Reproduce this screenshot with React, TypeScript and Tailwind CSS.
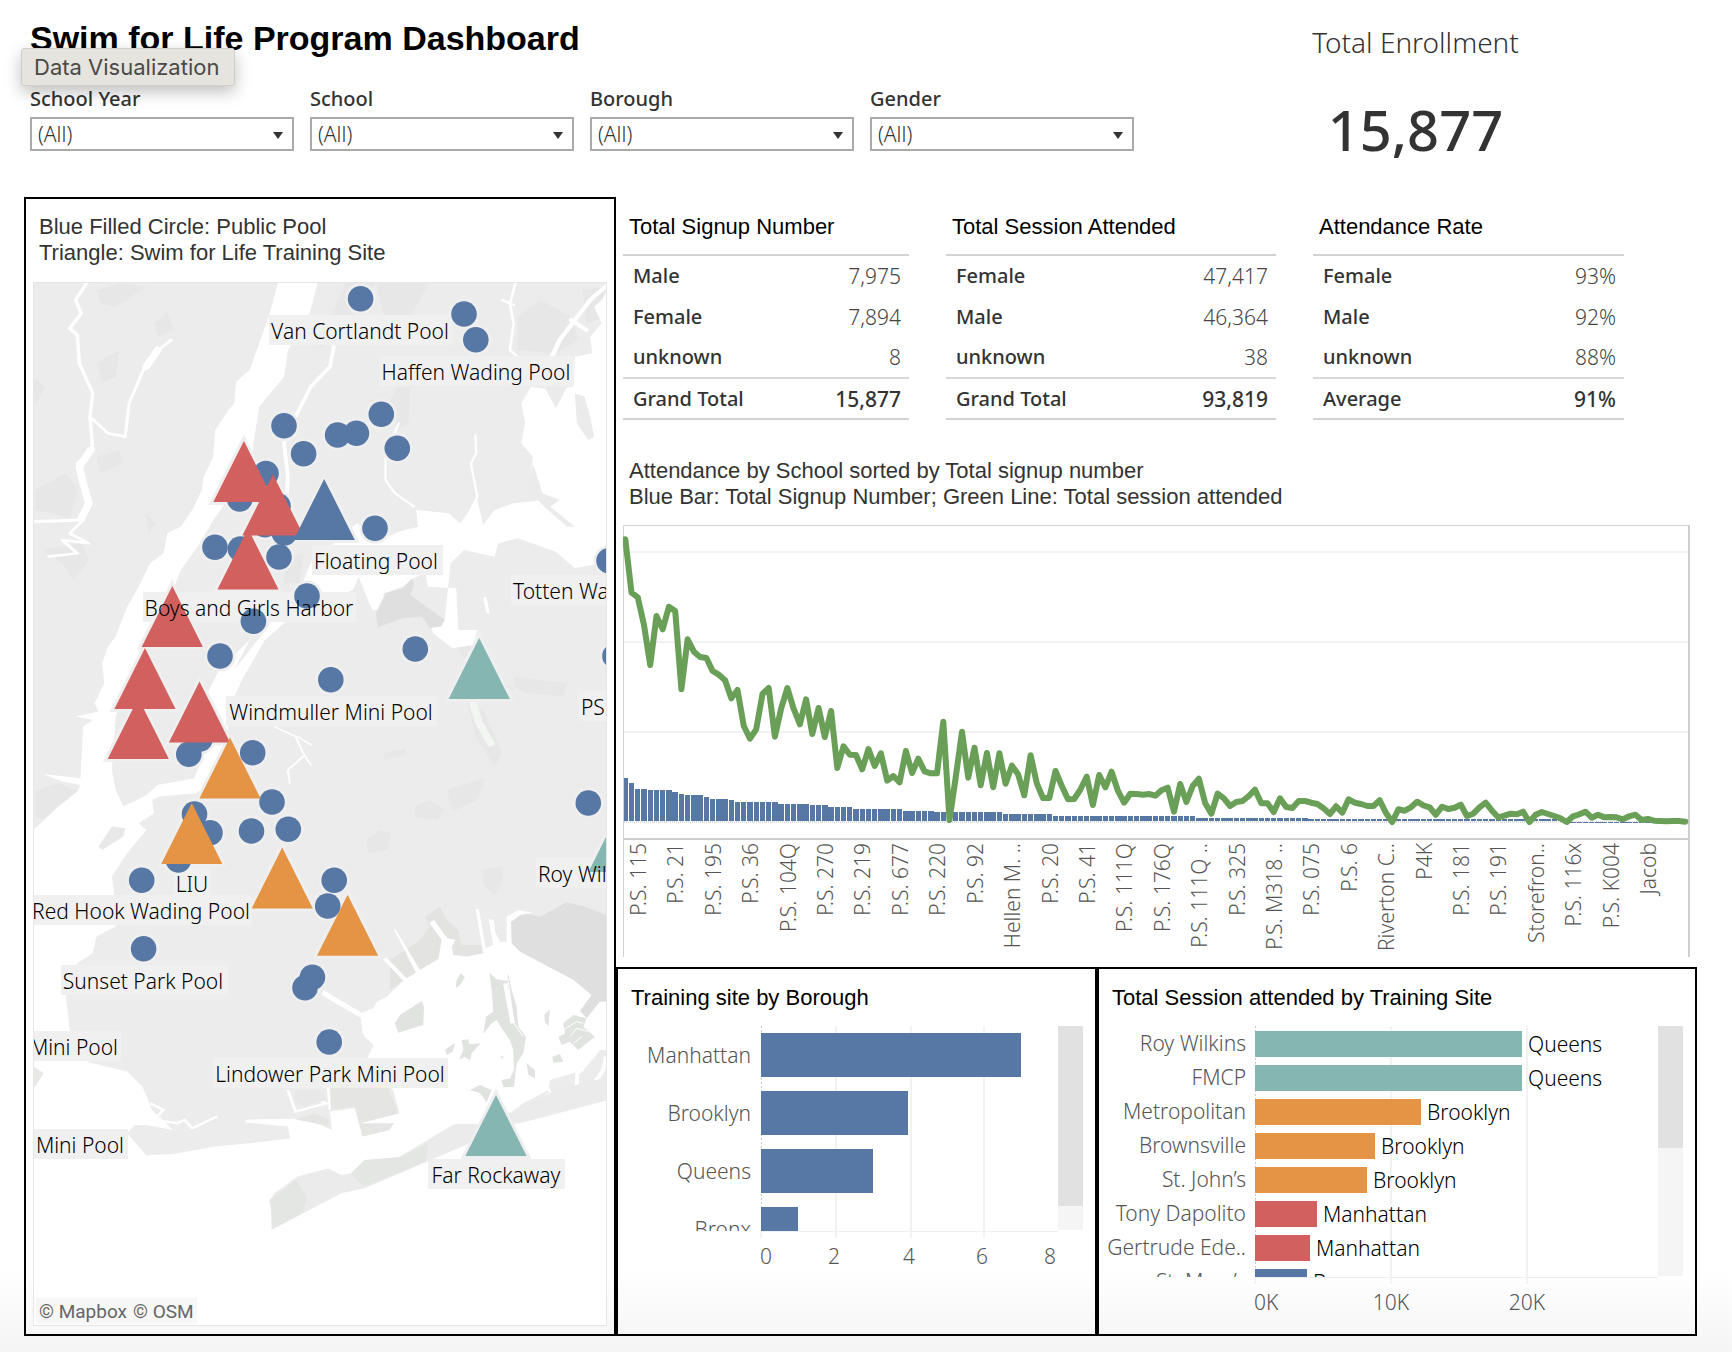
import React from "react";

const SANS = "font-['Noto_Sans','Open_Sans',sans-serif]";
const ARIAL = "font-['Liberation_Sans',Arial,sans-serif]";

const BLUE = "#5778a4";
const RED = "#d1605e";
const ORANGE = "#e49444";
const TEAL = "#85b6b2";

/* ---------- Filters ---------- */

const filters = ["School Year", "School", "Borough", "Gender"];

function Filter({ label }: { label: string }) {
  const id = label.toLowerCase().replace(" ", "-");
  return (
    <div className="min-w-0">
      <label htmlFor={id} className="block text-[20px] leading-6 font-medium text-[#333333]">
        {label}
      </label>
      <div className="relative mt-[6px]">
        <select
          id={id}
          className="block h-[34px] w-full appearance-none border-2 border-[#aaaaaa] bg-white pr-8 pl-[6px] text-[21px] leading-6 font-light text-[#333333]"
        >
          <option>(All)</option>
        </select>
        <svg
          viewBox="0 0 10 7"
          className="pointer-events-none absolute top-[15px] right-[11px] h-[7px] w-[10px]"
          aria-hidden="true"
        >
          <path d="M0 0H10L5 7Z" fill="#333" />
        </svg>
      </div>
    </div>
  );
}

/* ---------- Map ---------- */

const pools: [number, number][] = [
  [360.6, 298.7], [464, 314], [475.8, 339.7], [284, 425.7], [303.6, 453.7], [337.6, 435],
  [356.4, 433.3], [381.3, 414.3], [397.3, 448.3], [266, 473.5], [239.7, 499], [278, 506],
  [265, 524.7], [284.4, 533], [375, 528.3], [215, 547.3], [240.4, 549], [279, 557],
  [307, 596], [253.4, 621.3], [220, 656], [415.3, 649], [330.8, 679.7], [252.7, 752.7],
  [188.8, 754.3], [200, 739], [272, 802], [194.5, 814], [210, 832.7], [251.5, 831],
  [288.3, 829.3], [178.4, 860], [141.7, 880.3], [334.2, 880.3], [327.7, 906], [143.6, 948.7],
  [588.3, 803], [609, 560.7], [615, 656], [312.4, 977.3], [305, 987.7], [329.2, 1042],
];

const sites: [number, number, string][] = [
  [243.9, 441, RED], [273, 474.5, RED], [324.2, 479, BLUE], [248, 528.5, RED],
  [172.3, 586, RED], [138.3, 698, RED], [145, 648, RED], [199.5, 681.5, RED],
  [230, 737.5, ORANGE], [191.8, 803, ORANGE], [282.2, 847.5, ORANGE], [347.6, 894.7, ORANGE],
  [479.2, 638, TEAL], [619, 811, TEAL], [496, 1095, TEAL],
];

type Label = { text: string; x: number; y: number; from: number; to: number; anchor?: "start" | "middle" | "end" };

const labels: Label[] = [
  { text: "Van Cortlandt Pool", x: 360, y: 339, from: 269, to: 453, anchor: "middle" },
  { text: "Haffen Wading Pool", x: 476, y: 380, from: 380, to: 574, anchor: "middle" },
  { text: "Floating Pool", x: 376, y: 569, from: 312, to: 443, anchor: "middle" },
  { text: "Totten Wading Pool", x: 513, y: 599, from: 511, to: 620 },
  { text: "Boys and Girls Harbor", x: 249, y: 616, from: 143, to: 356, anchor: "middle" },
  { text: "Windmuller Mini Pool", x: 331, y: 720, from: 226, to: 437, anchor: "middle" },
  { text: "PS", x: 581, y: 715, from: 579, to: 620 },
  { text: "Roy Wilkins", x: 538, y: 882, from: 536, to: 620 },
  { text: "LIU", x: 192, y: 892, from: 174, to: 211, anchor: "middle" },
  { text: "Red Hook Wading Pool", x: 141, y: 919, from: 30, to: 252, anchor: "middle" },
  { text: "Sunset Park Pool", x: 143, y: 989, from: 61, to: 228, anchor: "middle" },
  { text: "Mini Pool", x: 118, y: 1055, from: 30, to: 121, anchor: "end" },
  { text: "Mini Pool", x: 124, y: 1153, from: 30, to: 128, anchor: "end" },
  { text: "Lindower Park Mini Pool", x: 330, y: 1082, from: 213, to: 448, anchor: "middle" },
  { text: "Far Rockaway", x: 496, y: 1183, from: 428, to: 565, anchor: "middle" },
];

const triangle = (x: number, y: number) => `M${x} ${y}l30.6 61h-61.2Z`;

function JamaicaBay() {
  return (
    <g transform="translate(310 890) scale(0.3333)">
      <path fill="#e3e4e2" d="M240 210L330 150 360 110 345 80 390 50 410 90 445 120 455 165 515 165 520 190 470 200 425 195 380 208 320 245 240 300Z" />
      <path fill="#dfdfdf" d="M603 95L640 70 690 80 770 37 820 48 895 78 895 345 870 335 830 385 805 365 845 315 790 270 630 185 603 160Z" />
      <path
        fill="#fff"
        d="M153 384L35 315 40 300 155 368 190 355 200 335 230 320 280 272 218 208 230 203 290 265 318 248 250 115 258 120 330 240 385 208 395 150 358 98 372 90 412 145 437 150 425 170 430 195 470 200 520 190 497 58 507 58 527 175 550 165 536 88 552 90 555 125 570 155 590 155 590 80 625 60 668 68 630 75 603 95 605 160 630 185 790 270 845 315 810 362 830 385 870 335 895 335 895 480 860 490 820 540 720 570 715 600 640 640 605 668 560 640 540 700 150 700 270 670 230 520 190 465 158 430Z"
      />
      <path fill="#ececec" d="M895 480L870 480 855 500 820 540 720 570 715 600 640 640 605 665 620 702 700 682 895 630Z" />
      <g fill="#e1e3e1">
        <path d="M255 400L270 375 335 333 342 350 340 405 265 428Z" />
        <path d="M437 295L440 270 452 250 465 262 450 285Z" />
        <path d="M538 248L560 268 590 272 595 250 605 300 620 350 625 410 648 440 640 490 620 520 612 590 580 592 575 570 600 565 612 540 610 480 600 450 575 415 560 390 545 400 520 432 528 380 550 365 545 300Z" />
        <path d="M455 450L475 448 478 462 512 460 485 490 480 512 465 500 447 510 460 480Z M405 480L435 458 428 485 410 495Z" />
        <path d="M480 600L510 585 545 600 530 637 510 610Z M650 520L675 540 675 565 655 555Z M703 375L720 358 715 410 705 395Z" />
        <path d="M745 440L765 432 760 400 790 375 830 385 820 410 855 440 830 460 805 480 780 455 755 465Z M727 500L750 492 760 515 730 518Z" />
        <path d="M570 500L580 498 578 508Z" />
      </g>
      <g fill="none" stroke="#fff">
        <path strokeWidth="13" d="M586 280L608 400" />
        <path strokeWidth="3" d="M593 262L612 400 640 440M760 420L800 395 820 400M780 440L800 415 835 425M790 460L815 440" />
        <path strokeWidth="12" d="M820 535L802 550 800 598M888 500L880 540 857 574" />
        <path strokeWidth="6" d="M690 610L712 590 722 608 700 622" />
      </g>
    </g>
  );
}

function Terrain() {
  return (
    <g>
      <g transform="translate(20 190) scale(0.3827 0.3333)">
        <rect x="30" y="270" width="1510" height="3150" fill="#ececec" />

        {/* parks and tonal patches */}
        <g fill="#e3e3e3" opacity="0.45">
          <path d="M36 565L65 590 45 640 36 640Z" />
          <path d="M200 300L260 280 330 290 250 350 210 340Z" />
          <path d="M350 400L385 365 400 420 360 440Z" />
          <path d="M200 520L260 480 250 560 215 580Z" />
          <path d="M40 900L120 850 150 900 130 980 40 960Z" />
          <path d="M850 276L930 276 850 420 780 480Z" />
          <path d="M930 276L1070 276 1000 420 960 420Z" />
          <path d="M985 590L1020 590 1015 700 985 720 965 640Z" />
          <path d="M1300 380L1360 330 1440 380 1460 450 1400 490 1300 480Z" />
          <path d="M1470 300L1530 290 1530 380 1480 400Z" />
          <path d="M330 970L355 1000 335 1030Z M200 800L260 780 270 820 210 850Z" />
          <path d="M60 1080L160 1060 180 1110 140 1170 110 1120Z" />
          <path d="M1100 1300L1160 1330 1230 1480 1290 1500 1290 1460 1430 1480 1420 1520 1330 1510 1180 1440Z" />
          <path d="M1170 1540L1210 1560 1260 1690 1240 1730 1190 1640Z" />
          <path d="M1115 1800L1215 1765 1195 1830 1130 1865Z M1035 1850L1070 1830 1110 1860 1090 1890 1030 1880Z" />
          <path d="M905 1950L940 1920 970 1930 960 1980 910 1990Z M950 1690L1010 1675 1005 1695 950 1710Z" />
          <path d="M1210 2040L1260 2030 1260 2080 1240 2120 1210 2080Z" />
          <path d="M40 1800L100 1780 155 1805 60 1890 40 1880Z M690 1110L740 1090 730 1180 690 1180Z" />
        </g>

        {/* Hudson, upper bay and East River */}
        <path
          fill="#fff"
          d="M676 270L650 380 600 540 565 575 560 640 545 660 510 720 505 800 480 860 475 900 450 960 420 1010 385 1030 375 1090 340 1120 310 1190 280 1250 250 1340 230 1370 215 1420 220 1480 195 1540 205 1565 145 1580 190 1590 165 1610 158 1765 60 1752 110 1775 158 1785 150 1805 100 1850 45 1910 30 1920 30 2617 180 2617 130 2520 120 2420 150 2320 190 2290 200 2240 250 2210 245 2100 240 2060 280 1990 330 1920 310 1900 350 1870 345 1830 365 1820 460 1810 530 1750 545 1600 545 1560 580 1470 640 1350 700 1290 760 1250 750 1235 650 1290 600 1350 520 1440 490 1510 500 1560 480 1700 455 1765 360 1785 330 1815 300 1835 270 1848 250 1800 240 1740 250 1580 300 1450 340 1330 400 1200 420 1140 470 1060 500 1000 560 900 600 850 610 760 625 650 690 560 700 480 750 400 780 270Z"
        />
        <path d="M600 1350L630 1300 655 1300 560 1440Z" fill="#ececec" />
        <path d="M205 1970L240 1910 275 1915 270 1940 215 1980Z" fill="#e8e8e8" />

        {/* Long Island Sound */}
        <path
          fill="#fff"
          d="M1540 290L1520 330 1500 350 1520 400 1490 440 1495 490 1450 500 1445 590 1390 600 1335 590 1310 640 1320 700 1310 760 1340 800 1335 860 1370 930 1290 940 1240 960 1210 1005 1195 930 1150 1000 1120 970 1035 960 1040 1010 990 1025 950 1045 880 1000 820 1060 770 1090 700 1290 760 1250 870 1200 885 1160 920 1260 955 1260 950 1210 1000 1190 1030 1165 1060 1145 1065 1190 1140 1195 1145 1320 1195 1320 1185 1365 1130 1375 1080 1330 1070 1300 1110 1290 1125 1120 1160 1080 1240 1100 1250 1060 1300 1045 1400 1085 1425 1110 1450 1135 1540 1115Z"
        />
        <path d="M1450 610L1475 620 1490 680 1500 740 1485 750 1455 700Z M1370 590L1430 590 1400 655Z" fill="#ebebeb" />
        <path d="M1340 820L1365 910 1410 930 1385 950 1450 1010 1430 1010 1370 950 1330 900Z" fill="#ebebeb" />
        <path d="M955 1210L1000 1195 1025 1165 1030 1180 1020 1215 1110 1290 1100 1310 1070 1315 1050 1280 1000 1285 935 1312 930 1270Z" fill="#dfdfdf" />

        {/* rivers and creeks */}
        <g fill="none" stroke="#fff" strokeLinejoin="round" strokeLinecap="round">
          <path strokeWidth="9" d="M175 278L145 330 160 370 130 415 150 435 155 520 190 610 183 680 190 780 150 820 165 880 185 940 165 990 36 995" />
          <path strokeWidth="20" d="M185 780L155 830 165 880 180 940 160 985" />
          <path strokeWidth="8" d="M183 680L230 730 275 740 285 640 330 520 350 490 395 450" />
          <path strokeWidth="20" d="M330 530L360 480" />
          <path strokeWidth="10" d="M820 470L810 530 760 590 720 680 690 760 700 860 695 950" />
          <path strokeWidth="7" d="M1295 278L1280 340 1290 400 1280 480 1300 500M1260 330L1290 345" />
          <path strokeWidth="6" d="M990 700L955 790 955 870 980 910 1030 950M1190 735L1192 790 1178 820 1195 920 1165 990" />
          <path strokeWidth="12" d="M1390 500L1410 450 1450 390 1490 330 1530 290M1440 390L1480 420" />
          <path strokeWidth="8" d="M165 990L130 1030 180 1060 110 1050 150 1090 75 1100" />
          <path strokeWidth="5" d="M665 1610L720 1640 740 1690 760 1725M725 1640L760 1665M740 1700L700 1740 705 1780" />
          <path strokeWidth="20" d="M1185 1545L1200 1600 1230 1660" stroke="#f4f6f4" />
          <path strokeWidth="9" d="M1215 1225L1222 1265" />
        </g>

        {/* Gravesend bay and the Atlantic */}
        <path
          fill="#fff"
          d="M30 2612L180 2617 280 2645 320 2690 345 2760 400 2820 330 2805 300 2805 280 2830 325 2890 330 2897 400 2892 510 2870 600 2860 705 2846 700 2810 590 2798 590 2790 720 2788 775 2800 815 2820 810 2765 875 2755 895 2840 965 2820 992 2775 975 2700 900 2620 925 2565 900 2540 890 2480 1495 2500 1540 2500 1540 3420 30 3420Z"
        />
        <path d="M36 2630L62 2650 36 2695Z" fill="#e8e9e7" />
        <path
          fill="none"
          stroke="#fff"
          strokeWidth="7"
          d="M340 2740L375 2760 350 2790 410 2800 430 2790 450 2815 515 2780M700 2700L720 2765 800 2740 735 2710M805 2690L810 2760M590 2793L720 2790"
        />
        <path d="M720 2700L790 2700 798 2730 740 2750 715 2730Z" fill="#e8e8e8" />
        <path d="M812 2690L960 2690 992 2775 965 2820 895 2840 875 2750 812 2760Z" fill="#e5e6e4" />
        <path d="M720 2788L770 2770 808 2790 805 2808Z" fill="#e5e6e4" />
      </g>

      <JamaicaBay />

      {/* Rockaway peninsula */}
      <g transform="translate(20 190) scale(0.3827 0.3333)">
        <path
          fill="#ebebeb"
          d="M650 3035L665 3010 725 2960 805 2936 840 2955 865 2950 905 2910 990 2902 1135 2802 1195 2802 1290 2765 1400 2700 1540 2660 1540 2730 1400 2765 1290 2802 1050 2922 900 2995 840 3010 740 3070 657 3120 660 3060Z"
        />
        <path d="M900 2910L990 2902 1065 2860 1060 2915 900 2990 865 2950Z M655 3030L720 2970 750 3020 740 3068 658 3118Z" fill="#e4e6e3" />
      </g>
    </g>
  );
}

function PoolMap() {
  return (
    <svg viewBox="33 282 574 1044" className={`mt-4 block w-full ${SANS}`} role="img" aria-label="Map of pools and training sites">
      <defs>
        <clipPath id="map-frame">
          <rect x="34" y="283" width="572" height="1042" />
        </clipPath>
      </defs>
      <g clipPath="url(#map-frame)">
        <Terrain />
        <g fill="none" stroke="#efefef" strokeWidth="6">
          {pools.map(([x, y], i) => (
            <circle key={i} cx={x} cy={y} r="12.5" />
          ))}
          {sites.map(([x, y], i) => (
            <path key={i} d={triangle(x, y)} />
          ))}
        </g>
        {labels.map((l, i) => (
          <rect key={i} x={l.from} y={l.y - 24} width={l.to - l.from} height="30" fill="#f0f0f0" />
        ))}
        {pools.map(([x, y], i) => (
          <circle key={i} cx={x} cy={y} r="12.8" fill={BLUE} />
        ))}
        {sites.map(([x, y, fill], i) => (
          <path key={i} d={triangle(x, y)} fill={fill} />
        ))}
        {labels.map((l, i) => (
          <text key={i} x={l.x} y={l.y} textAnchor={l.anchor ?? "start"} fontSize="21" fontWeight="300" fill="#000">
            {l.text}
          </text>
        ))}
        <rect x="36" y="1298" width="161" height="26" fill="#f7f7f7" />
        <text x="39" y="1318" fontSize="19" fill="#666" className="font-[Roboto,sans-serif]">
          © Mapbox
        </text>
        <text x="133" y="1318" fontSize="19" fill="#666" className="font-[Roboto,sans-serif]">
          © OSM
        </text>
      </g>
      <rect x="33.5" y="282.5" width="573" height="1043" fill="none" stroke="#e6e6e6" />
    </svg>
  );
}

/* ---------- Summary tables ---------- */

type Summary = { title: string; split: string; rows: [string, string][] };

const summaries: Summary[] = [
  {
    title: "Total Signup Number",
    split: "w-[64%]",
    rows: [["Male", "7,975"], ["Female", "7,894"], ["unknown", "8"], ["Grand Total", "15,877"]],
  },
  {
    title: "Total Session Attended",
    split: "w-[58%]",
    rows: [["Female", "47,417"], ["Male", "46,364"], ["unknown", "38"], ["Grand Total", "93,819"]],
  },
  {
    title: "Attendance Rate",
    split: "w-[46%]",
    rows: [["Female", "93%"], ["Male", "92%"], ["unknown", "88%"], ["Average", "91%"]],
  },
];

function SummaryTable({ title, split, rows }: Summary) {
  return (
    <section className="min-w-0">
      <h2 className={`pl-[6px] text-[22px] leading-[26px] whitespace-nowrap text-black ${ARIAL}`}>{title}</h2>
      <table className="mt-[14px] w-full border-collapse border-y-2 border-[#d2d2d2] text-[20px] leading-6">
        <tbody>
          {rows.map(([name, value], i) => {
            const total = i === rows.length - 1;
            return (
              <tr key={name} className={total ? "h-[41px] border-t-2 border-[#d8d8d8]" : "h-[41px]"}>
                <th scope="row" className={`pl-[10px] text-left font-medium text-[#333333] ${split}`}>
                  {name}
                </th>
                <td
                  className={
                    total
                      ? "pr-2 text-right text-[21px] font-medium text-[#333333]"
                      : "pr-2 text-right text-[21px] font-light text-[#444444]"
                  }
                >
                  {value}
                </td>
              </tr>
            );
          })}
        </tbody>
      </table>
    </section>
  );
}

/* ---------- Attendance by school ---------- */

/* Session line, in thirds of a unit below y = 510. */
const sessions = [
  88, 248, 262, 345, 465, 318, 358, 290, 303, 538, 388, 425, 441, 444, 483, 494, 511, 565, 540, 648,
  686, 658, 552, 534, 680, 595, 534, 596, 643, 568, 672, 594, 681, 603, 774, 709, 734, 735, 778, 717,
  768, 730, 812, 798, 817, 723, 789, 746, 784, 790, 790, 635, 930, 800, 665, 803, 713, 826, 729, 832,
  730, 821, 767, 793, 856, 736, 820, 864, 864, 783, 828, 868, 867, 838, 800, 885, 795, 832, 785, 842,
  878, 851, 852, 854, 852, 857, 841, 833, 905, 822, 876, 828, 806, 880, 911, 851, 865, 888, 876, 873,
  858, 839, 880, 880, 906, 865, 891, 894, 873, 873, 878, 882, 895, 912, 889, 908, 868, 878, 882, 888,
  888, 871, 909, 936, 898, 902, 892, 875, 886, 892, 914, 890, 897, 893, 884, 918, 911, 892, 878, 902,
  922, 917, 911, 913, 905, 936, 914, 906, 912, 918, 925, 936, 919, 913, 905, 923, 914, 922, 921, 922,
  928, 919, 914, 930, 927, 932, 933, 934, 933, 933, 935,
];

/* [number of schools, bar height] */
const signupRuns: [number, number][] = [
  [1, 43], [1, 38], [2, 32], [4, 31], [1, 29], [1, 27], [3, 26], [1, 24], [3, 22], [1, 21], [7, 19],
  [5, 17], [3, 16], [4, 14], [8, 12], [5, 10], [11, 9], [8, 7], [23, 5], [18, 3], [41, 2], [20, 1],
];
const signups = signupRuns.flatMap(([n, h]) => Array<number>(n).fill(h));

const schools = [
  "P.S. 115", "P.S. 21", "P.S. 195", "P.S. 36", "P.S. 104Q", "P.S. 270", "P.S. 219", "P.S. 677",
  "P.S. 220", "P.S. 92", "Hellen M. ..", "P.S. 20", "P.S. 41", "P.S. 111Q", "P.S. 176Q", "P.S. 111Q ..",
  "P.S. 325", "P.S. M318 ..", "P.S. 075", "P.S. 6", "Riverton C..", "P4K", "P.S. 181", "P.S. 191",
  "Storefron..", "P.S. 116x", "P.S. K004", "Jacob",
];

const STEP = 6.235;
const FIRST = 625.3;

function SchoolChart() {
  const points = sessions.map((v, i) => `${(FIRST + i * STEP).toFixed(1)},${(510 + v / 3).toFixed(1)}`).join(" ");
  return (
    <svg viewBox="623 525 1067 432" className={`block w-full ${SANS}`} role="img" aria-label="Attendance by school">
      <g fill="none" strokeWidth="2" stroke="#f2f2f2">
        <path d="M624 552H1688M624 642H1688M624 732H1688" />
      </g>
      <path d="M624 822H1688" stroke="#bbb" strokeDasharray="1 1" />
      <g fill={BLUE} shapeRendering="crispEdges">
        {signups.map((h, i) => {
          const left = Math.max(624, FIRST + i * STEP - 2.7);
          const right = FIRST + i * STEP + 2.7;
          return <rect key={i} x={left} y={(h === 1 ? 822.6 : 821.4) - h} width={right - left} height={h} />;
        })}
      </g>
      <path d="M623.5 957V525.5H1689" fill="none" stroke="#d2d2d2" />
      <path d="M1689 525V957" stroke="#cfcfcf" strokeWidth="2" />
      <path d="M623 839H1690" stroke="#cfcfcf" strokeWidth="2" />
      <polyline points={points} fill="none" stroke="#6a9f58" strokeWidth="6" strokeLinejoin="round" strokeLinecap="round" />
      <g fontSize="21" fontWeight="300" fill="#555" textAnchor="end">
        {schools.map((name, i) => (
          <text key={i} transform={`translate(${646 + i * 37.41} 843) rotate(-90)`}>
            {name}
          </text>
        ))}
      </g>
    </svg>
  );
}

/* ---------- Bar panels ---------- */

const boroughs: [string, number][] = [["Manhattan", 260], ["Brooklyn", 147], ["Queens", 112], ["Bronx", 37]];

const trainingSites: [string, number, string, string][] = [
  ["Roy Wilkins", 267, TEAL, "Queens"],
  ["FMCP", 267, TEAL, "Queens"],
  ["Metropolitan", 166, ORANGE, "Brooklyn"],
  ["Brownsville", 120, ORANGE, "Brooklyn"],
  ["St. John’s", 112, ORANGE, "Brooklyn"],
  ["Tony Dapolito", 62, RED, "Manhattan"],
  ["Gertrude Ede..", 55, RED, "Manhattan"],
  ["St. Mary’s", 52, BLUE, "Bronx"],
];

function BoroughChart() {
  return (
    <svg viewBox="0 0 440 245" className={`block min-w-0 flex-[440_1_0] ${SANS}`} role="img" aria-label="Training sites by borough">
      <path d="M218 0V212M293 0V212M366 0V212M143 205V212" stroke="#f2f2f2" strokeWidth="2" />
      <path d="M143.5 0V205" stroke="#ccc" strokeDasharray="2 2" />
      <svg x="0" y="0" width="440" height="205" overflow="hidden">
        {boroughs.map(([name, width], i) => (
          <g key={name}>
            <rect x="143" y={7 + i * 58} width={width} height="44" fill={BLUE} />
            <text x="133" y={37 + i * 58} fontSize="21" fontWeight="300" textAnchor="end" fill="#555">
              {name}
            </text>
          </g>
        ))}
      </svg>
      <path d="M143 205.5H440" stroke="#efefef" />
      <g fontSize="21" fontWeight="300" fill="#555" textAnchor="middle">
        <text x="148" y="238">0</text>
        <text x="216" y="238">2</text>
        <text x="291" y="238">4</text>
        <text x="364" y="238">6</text>
        <text x="432" y="238">8</text>
      </g>
    </svg>
  );
}

function SiteChart() {
  return (
    <svg viewBox="0 0 559 290" className={`block min-w-0 flex-[559_1_0] ${SANS}`} role="img" aria-label="Sessions attended by training site">
      <path d="M292 0V258M428 0V258M156 251V258" stroke="#f2f2f2" strokeWidth="2" />
      <path d="M156.5 0V250" stroke="#ccc" strokeDasharray="2 2" />
      <svg x="0" y="0" width="559" height="251" overflow="hidden">
        {trainingSites.map(([name, width, fill, borough], i) => (
          <g key={name} fontSize="21" fontWeight="300">
            <rect x="156" y={5 + i * 34} width={width} height="26" fill={fill} />
            <text x="147" y={25 + i * 34} textAnchor="end" fill="#555">
              {name}
            </text>
            <text x={156 + width + 6} y={26 + i * 34} fill="#000">
              {borough}
            </text>
          </g>
        ))}
      </svg>
      <path d="M156 251.5H559" stroke="#efefef" />
      <g fontSize="21" fontWeight="300" fill="#555">
        <text x="155" y="284">0K</text>
        <text x="292" y="284" textAnchor="middle">10K</text>
        <text x="428" y="284" textAnchor="middle">20K</text>
      </g>
    </svg>
  );
}

export default function App() {
  return (
    <div className={`min-h-screen bg-[linear-gradient(to_bottom,#ffffff_94%,#f5f5f5)] pr-[35px] pb-4 pl-6 ${SANS}`}>
      <header className="relative grid grid-cols-[1110fr_563fr] pb-[46px]">
        <div className="pt-[18px] pl-[6px]">
          <h1 className={`text-[34px] leading-10 font-bold whitespace-nowrap text-black ${ARIAL}`}>
            Swim for Life Program Dashboard
          </h1>
          <div className="mt-[29px] grid grid-cols-4 gap-4">
            {filters.map((label) => (
              <Filter key={label} label={label} />
            ))}
          </div>
        </div>
        <div className="pt-[22px] text-center text-[#333333]">
          <p className="text-[28px] leading-10 font-light">Total Enrollment</p>
          <p className="mt-[45px] text-[56px] leading-[44px] font-medium">15,877</p>
        </div>
        <div
          role="tooltip"
          className="absolute top-12 -left-[3px] rounded-[3px] border border-[#d0cec9] bg-[#e6e4df] pr-[15px] pl-3 font-[Inter,sans-serif] text-[22px] leading-9 whitespace-nowrap text-[#4a4a48] shadow-[0_6px_16px_rgba(0,0,0,0.25)]"
        >
          Data Visualization
        </div>
      </header>

      <main className="grid grid-cols-[592fr_1081fr]">
        <section className="border-2 border-black px-[7px] pt-[15px] pb-2">
          <p className={`pl-[6px] text-[22px] leading-[26px] text-[#333333] ${ARIAL}`}>
            Blue Filled Circle: Public Pool
            <br />
            Triangle: Swim for Life Training Site
          </p>
          <PoolMap />
        </section>

        <div className="flex min-w-0 flex-col">
          <div className="grid grid-cols-[286fr_330fr_311fr] gap-x-[37px] pt-[17px] pr-[73px] pl-[7px]">
            {summaries.map((s) => (
              <SummaryTable key={s.title} {...s} />
            ))}
          </div>

          <section className="px-[7px] pt-[38px] pb-[10px]">
            <p className={`mb-[15px] pl-[6px] text-[22px] leading-[26px] text-[#333333] ${ARIAL}`}>
              Attendance by School sorted by Total signup number
              <br />
              Blue Bar: Total Signup Number; Green Line: Total session attended
            </p>
            <SchoolChart />
          </section>

          <div className="grid flex-1 grid-cols-[481fr_600fr]">
            <section className="border-2 border-black pt-4 pr-3">
              <h2 className={`pl-[13px] text-[22px] leading-[26px] text-black ${ARIAL}`}>Training site by Borough</h2>
              <div className="mt-[15px] flex items-start">
                <BoroughChart />
                <div className="h-[204px] w-[25px] bg-[#f5f5f5]">
                  <div className="h-[180px] bg-[#e1e1e1]" />
                </div>
              </div>
            </section>
            <section className="border-2 border-black pt-4 pr-3">
              <h2 className={`pl-[13px] text-[22px] leading-[26px] text-black ${ARIAL}`}>
                Total Session attended by Training Site
              </h2>
              <div className="mt-[15px] flex items-start">
                <SiteChart />
                <div className="h-[250px] w-[25px] bg-[#f5f5f5]">
                  <div className="h-[122px] bg-[#e1e1e1]" />
                </div>
              </div>
            </section>
          </div>
        </div>
      </main>
    </div>
  );
}
